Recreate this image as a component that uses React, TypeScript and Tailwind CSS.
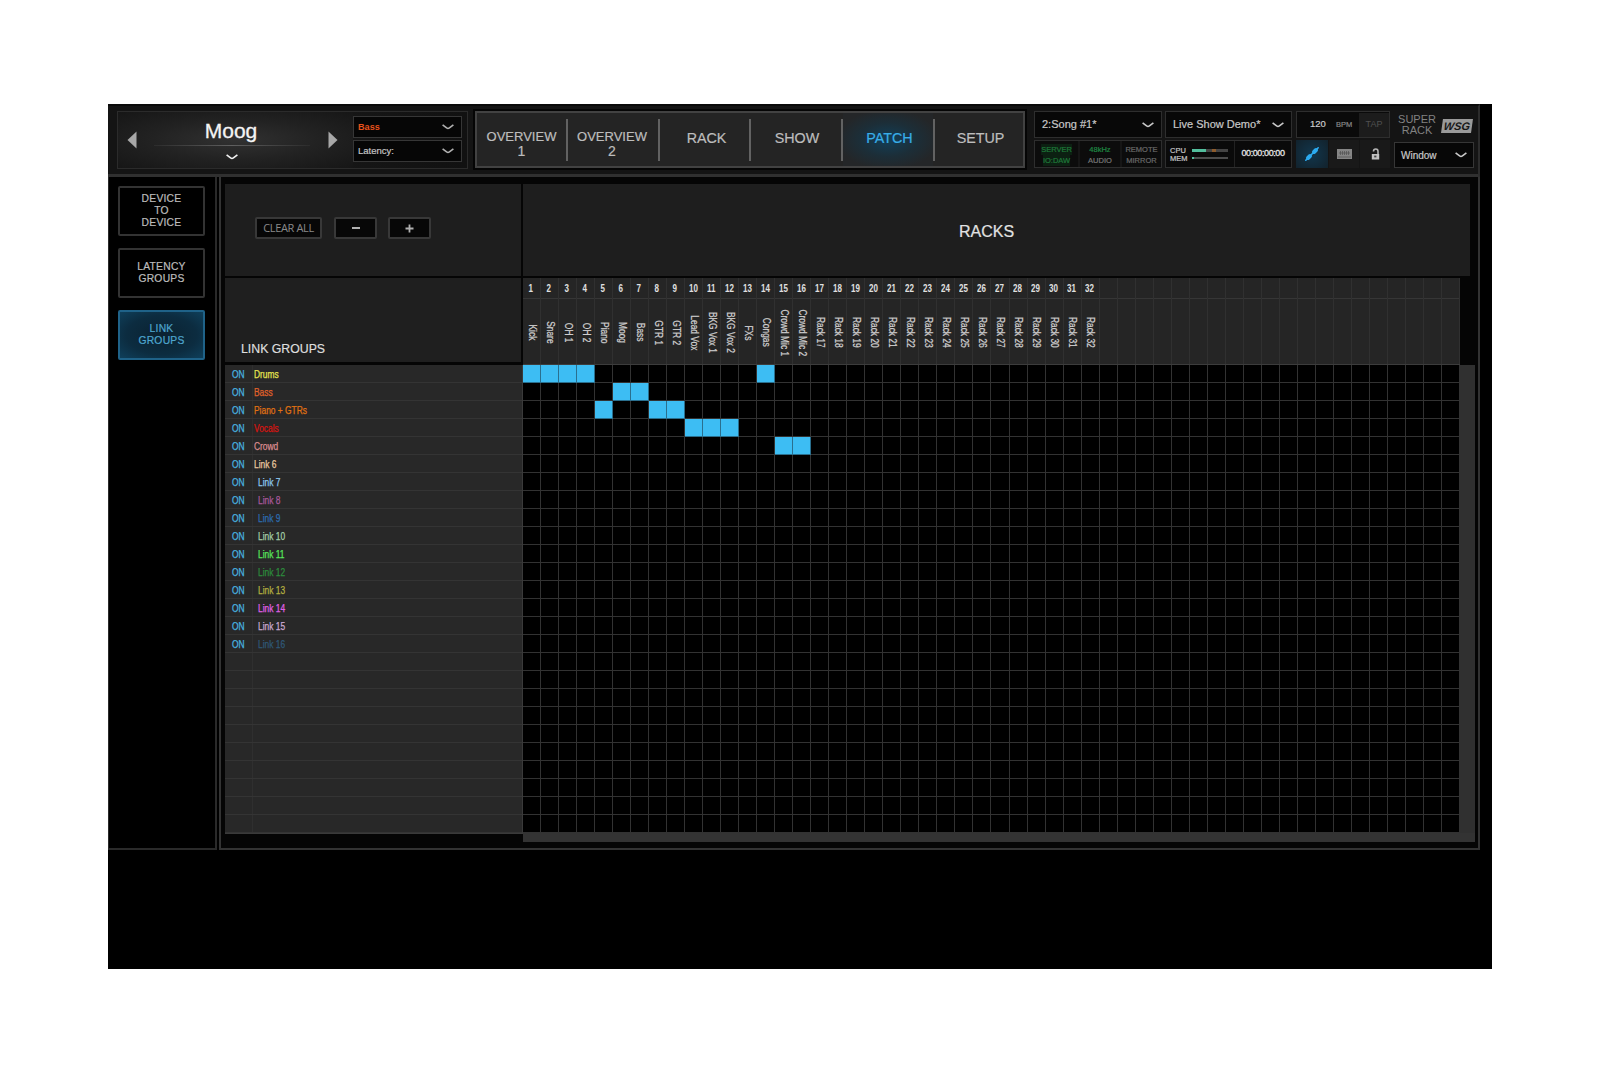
import React from "react";

const SANS = "font-['Liberation_Sans',Arial,sans-serif]";

const COLUMN_NAMES = [
  "Kick", "Snare", "OH 1", "OH 2", "Piano", "Moog", "Bass", "GTR 1", "GTR 2", "Lead Vox",
  "BKG Vox 1", "BKG Vox 2", "FXs", "Congas", "Crowd Mic 1", "Crowd Mic 2",
  ...Array.from({ length: 16 }, (_, i) => `Rack ${i + 17}`),
];
const COLS = 52;
const ROWS = 26;

const ACTIVE: number[][] = [[1, 2, 3, 4, 14], [6, 7], [5, 8, 9], [10, 11, 12], [15, 16]];

const GROUPS = [
  { name: "Drums", color: "text-[#e6e650]" },
  { name: "Bass", color: "text-[#e0622a]" },
  { name: "Piano + GTRs", color: "text-[#e07212]" },
  { name: "Vocals", color: "text-[#d81410]" },
  { name: "Crowd", color: "text-[#dc8c90]" },
  { name: "Link 6", color: "text-[#ecc9a0]" },
  { name: "Link 7", color: "text-[#8cc8f0]" },
  { name: "Link 8", color: "text-[#a8589c]" },
  { name: "Link 9", color: "text-[#2c6cb0]" },
  { name: "Link 10", color: "text-[#a4cfa8]" },
  { name: "Link 11", color: "text-[#58e85c]" },
  { name: "Link 12", color: "text-[#2c8c3c]" },
  { name: "Link 13", color: "text-[#b4b040]" },
  { name: "Link 14", color: "text-[#e060e8]" },
  { name: "Link 15", color: "text-[#ccaad4]" },
  { name: "Link 16", color: "text-[#2f5878]" },
];

function Chevron({ className = "" }: { className?: string }) {
  return (
    <svg className={`h-[6px] w-[12px] shrink-0 ${className}`} viewBox="0 0 12 6" fill="none" stroke="currentColor" strokeWidth="1.6">
      <path d="M0.6 0.8L4.6 3.9Q6 4.9 7.4 3.9L11.4 0.8" />
    </svg>
  );
}

function RackSelector() {
  return (
    <div className="flex h-[58px] w-[351px] border border-[#2b2b2b] bg-gradient-to-r from-[#1e1e1e] via-[#181818] to-[#111111]">
      <div className="flex w-[235px] items-center bg-[radial-gradient(ellipse_at_center,#313131_0%,#222222_50%,#161616_100%)] pl-[9px]">
        <svg className="h-[18px] w-[10px]" viewBox="0 0 10 18"><path d="M9.5 0.5V17.5L0.5 9z" fill="#a8a8a8" /></svg>
        <div className="ml-[17px] flex h-full w-[156px] flex-col items-center">
          <div className="flex h-[33px] items-end pr-[2px] text-[21px] leading-[29px] text-[#f4f4f4] [-webkit-text-stroke:0.3px]">Moog</div>
          <div className="h-px w-full bg-gradient-to-r from-[#2c2c2c] via-[#606060] to-[#2c2c2c]" />
          <Chevron className="mt-[8px] text-[#f2f2f2]" />
        </div>
        <svg className="ml-[18px] h-[18px] w-[10px]" viewBox="0 0 10 18"><path d="M0.5 0.5V17.5L9.5 9z" fill="#a8a8a8" /></svg>
      </div>
      <div className="flex w-[109px] flex-col gap-[2px] pt-[4px]">
        <div className="flex h-[22px] items-center justify-between border border-[#363636] bg-[#060606] pl-[4px] pr-[7px] text-[9.5px] font-bold text-[#e8531c]">
          <span className="inline-block origin-left scale-x-[0.96]">Bass</span>
          <Chevron className="text-[#b0b0b0]" />
        </div>
        <div className="flex h-[22px] items-center justify-between border border-[#363636] bg-[#060606] pl-[4px] pr-[7px] text-[9.5px] text-[#c4c4c4] [-webkit-text-stroke:0.2px]">
          <span>Latency:</span>
          <Chevron className="text-[#b0b0b0]" />
        </div>
      </div>
    </div>
  );
}

function NavItem({ children, active, last, layout }: { children: React.ReactNode; active?: boolean; last?: boolean; layout: string }) {
  return (
    <>
      <div
        className={`flex h-full shrink-0 flex-col items-center justify-center text-center ${
          active
            ? "bg-[radial-gradient(ellipse_at_center,#123f58_0%,#1c2e38_45%,#242628_80%)] text-[#38aee8]"
            : "text-[#bdbdbd]"
        } ${layout}`}
      >
        {children}
      </div>
      {!last && <div className="h-[42px] w-[2px] shrink-0 bg-[#626262]" />}
    </>
  );
}

function Nav() {
  return (
    <nav className="ml-[7px] flex h-[57px] w-[550px] items-center border-2 border-[#424242] bg-[#242424] text-[14.3px] shadow-[0_0_0_2px_#050505] [-webkit-text-stroke:0.2px]">
      <NavItem layout="w-[89px] pt-[10px]">
        <span className="text-[13px] leading-[14px]">OVERVIEW</span>
        <span className="text-[14px] leading-[15px]">1</span>
      </NavItem>
      <NavItem layout="w-[90px] pt-[10px] pr-[2px]">
        <span className="text-[13px] leading-[14px]">OVERVIEW</span>
        <span className="text-[14px] leading-[15px]">2</span>
      </NavItem>
      <NavItem layout="w-[89px] pl-[4px] pb-px">RACK</NavItem>
      <NavItem layout="w-[90px] pl-[2px] pb-px">SHOW</NavItem>
      <NavItem active layout="w-[90px] pl-[3px] pb-px">PATCH</NavItem>
      <NavItem last layout="w-[88px] pl-[3px] pb-px">SETUP</NavItem>
    </nav>
  );
}

function StatusCell({ top, bottom, topColor, bottomColor, width }: { top: string; bottom: string; topColor: string; bottomColor: string; width: string }) {
  return (
    <div className={`flex flex-col items-center justify-center bg-[#0c0c0c] pt-px text-[7.5px] leading-[11px] [-webkit-text-stroke:0.2px] ${width}`}>
      <span className={topColor}>{top}</span>
      <span className={bottomColor}>{bottom}</span>
    </div>
  );
}

function StatusPanel() {
  return (
    <div className="ml-[9px] flex gap-[4px]">
      <div className="flex w-[258px] flex-col gap-[2px]">
        <div className="flex h-[27px] gap-[3px]">
          <div className="flex w-[128px] items-center justify-between border border-[#2e2e2e] bg-[#080808] pl-[7px] pr-[7px] text-[11px] text-[#c8c8c8] [-webkit-text-stroke:0.2px]">
            <span>2:Song #1*</span>
            <Chevron />
          </div>
          <div className="flex w-[127px] items-center justify-between border border-[#2e2e2e] bg-[#080808] pl-[7px] pr-[7px] text-[11px] text-[#c8c8c8] [-webkit-text-stroke:0.2px]">
            <span className="whitespace-nowrap">Live Show Demo*</span>
            <Chevron />
          </div>
        </div>
        <div className="flex h-[28px] gap-[3px]">
          <div className="flex w-[128px] gap-[2px] border border-[#2e2e2e] bg-[#161616]">
            <StatusCell top="SERVER" bottom="IO:DAW" topColor="bg-[#0c2012] text-[#1f7a3a]" bottomColor="bg-[#0c2012] text-[#1f7a3a]" width="w-[43px]" />
            <StatusCell top="48kHz" bottom="AUDIO" topColor="text-[#1f8a44]" bottomColor="text-[#777777]" width="w-[40px]" />
            <StatusCell top="REMOTE" bottom="MIRROR" topColor="text-[#6a6a6a]" bottomColor="text-[#6a6a6a]" width="w-[39px]" />
          </div>
          <div className="flex w-[127px] border border-[#2e2e2e] bg-[#0a0a0a]">
            <div className="flex w-[69px] flex-col justify-center gap-px border-r border-[#222] pl-[4px] text-[7.5px] leading-[7px] text-[#c8c8c8] [-webkit-text-stroke:0.2px]">
              <div className="flex items-center gap-[3px]">
                <span className="w-[19px]">CPU</span>
                <span className="flex h-[3px] w-[36px] bg-[#444]">
                  <span className="w-[14px] bg-[#52bd9c]" />
                  <span className="ml-[6px] w-[4px] bg-[#8d5b2c]" />
                </span>
              </div>
              <div className="flex items-center gap-[3px]">
                <span className="w-[19px]">MEM</span>
                <span className="flex h-[2px] w-[36px] bg-[#4c4c4c]">
                  <span className="w-[2px] bg-[#52bd9c]" />
                </span>
              </div>
            </div>
            <div className="flex flex-1 items-center justify-center text-[9px] text-[#e4e4e4] [-webkit-text-stroke:0.3px]">
              <span className="whitespace-nowrap tracking-[-0.4px]">00:00:00:00</span>
            </div>
          </div>
        </div>
      </div>
      <div className="flex w-[94px] flex-col gap-[2px]">
        <div className="flex h-[27px] items-center border border-[#2e2e2e] bg-[#0a0a0a] text-[#cccccc]">
          <span className="w-[39px] pl-[13px] text-[9.5px] [-webkit-text-stroke:0.2px]">120</span>
          <span className="w-[23px] text-[7.5px] text-[#888888] [-webkit-text-stroke:0.2px]">BPM</span>
          <span className="flex h-[24px] flex-1 items-center justify-center bg-[#1c1c1c] text-[9px] text-[#505050]">TAP</span>
        </div>
        <div className="flex h-[28px] gap-px">
          <div className="flex w-[32px] items-center justify-center bg-[radial-gradient(circle_at_center,#12364c_0%,#12222c_100%)]">
            <svg className="h-[16px] w-[16px]" viewBox="0 0 16 16" stroke="#2cabf0" strokeLinecap="round">
              <path d="M4 12L6 10M10 6L12 4" strokeWidth="4" />
              <path d="M1.8 14.2L14.2 1.8" strokeWidth="1.6" />
            </svg>
          </div>
          <div className="flex w-[30px] items-center justify-center bg-[#191919]">
            <svg className="h-[10px] w-[15px]" viewBox="0 0 15 10">
              <rect width="15" height="10" fill="#858585" />
              <path d="M3.5 2V6M5.5 2V6M7.5 2V6M9.5 2V6M11.5 2V6M1 8H14M2 4H13" stroke="#505050" strokeWidth="0.7" />
            </svg>
          </div>
          <div className="flex w-[30px] items-center justify-center bg-[#191919]">
            <svg className="h-[12px] w-[9px]" viewBox="0 0 9 12">
              <path d="M2.5 3.5C2.5 0.2 7 0.2 7 3.5V6.5" fill="none" stroke="#b4b4b4" strokeWidth="1.6" />
              <rect x="0.8" y="6" width="7.4" height="5.5" fill="#c2c2c2" />
              <rect x="3.2" y="7.6" width="2.2" height="1.8" fill="#444" />
            </svg>
          </div>
        </div>
      </div>
      <div className="flex w-[80px] flex-col">
        <div className="flex h-[31px] items-start justify-between pr-[2px] pt-[3px]">
          <div className="flex w-[42px] flex-col items-center pl-[4px] text-[11px] leading-[11px] text-[#828282]">
            <span>SUPER</span>
            <span>RACK</span>
          </div>
          <div className="mt-[5px] flex h-[14px] w-[30px] -skew-x-[8deg] items-center justify-center bg-[#9a9a9a] text-[11px] font-bold italic text-[#171717]">WSG</div>
        </div>
        <div className="flex h-[26px] items-center justify-between border border-[#363636] bg-[#070707] pl-[6px] pr-[6px] text-[10px] text-[#c8c8c8] [-webkit-text-stroke:0.2px]">
          <span>Window</span>
          <Chevron />
        </div>
      </div>
    </div>
  );
}

function SideButton({ lines, active }: { lines: string[]; active?: boolean }) {
  return (
    <button
      className={`flex h-[50px] w-[87px] flex-col items-center justify-center rounded-[2px] border-2 text-[10.3px] leading-[12.3px] tracking-[0.25px] [-webkit-text-stroke:0.2px] ${
        active
          ? "border-[#1f6288] bg-[radial-gradient(ellipse_at_center,#0b2230_0%,#0c2c40_60%,#0f3f5a_100%)] text-[#4ea6cf]"
          : "border-[#333333] bg-black text-[#bcbcbc]"
      }`}
    >
      {lines.map((l, i) => (
        <span key={i}>{l}</span>
      ))}
    </button>
  );
}

function ToolButton({ children, width }: { children: React.ReactNode; width: string }) {
  return (
    <button className={`flex h-[22px] items-center justify-center rounded-[2px] border-2 border-[#383838] bg-[#070707] text-[#a6a6a6] ${width}`}>
      {children}
    </button>
  );
}

function GroupList() {
  return (
    <div className="h-[469px] w-[298px] border-b border-r border-[#3a3a3a] bg-[#282828]">
      {Array.from({ length: ROWS }, (_, r) => {
        const g = GROUPS[r];
        return (
          <div key={r} className="flex h-[18px] border-b border-[#343434] text-[10px] leading-[19px] [-webkit-text-stroke:0.25px]">
            <div className="w-[28px] border-r border-[#2f2f2f] pl-[7px] text-[#48b4e0]">
              {g && <span className="inline-block origin-left scale-x-[0.84]">ON</span>}
            </div>
            {g && (
              <div className={`${r > 5 ? "pl-[5px]" : "pl-px"} ${g.color}`}>
                <span className="inline-block origin-left scale-x-[0.84] whitespace-nowrap">{g.name}</span>
              </div>
            )}
          </div>
        );
      })}
    </div>
  );
}

function ColumnHeaders() {
  return (
    <div className="grid h-[87px] w-[937px] grid-cols-[repeat(52,minmax(0,1fr))] border-b border-[#3c3c3c] bg-[#252525]">
      {Array.from({ length: COLS }, (_, c) => (
        <div key={c} className="flex flex-col items-center border-r border-[#303030]">
          <div className="flex h-[21px] w-full items-center justify-center border-b border-[#363636] pr-px pt-px text-[10px] font-bold text-[#e0e0e0]">
            <span className="inline-block scale-x-[0.8]">{c < 32 ? c + 1 : ""}</span>
          </div>
          <div className="flex h-[65px] items-center justify-center pt-[2px] text-[10px] leading-[12px] text-[#cfcfcf] [-webkit-text-stroke:0.25px]">
            <span className="inline-block scale-y-[0.84] whitespace-nowrap [writing-mode:vertical-rl]">{COLUMN_NAMES[c] ?? ""}</span>
          </div>
        </div>
      ))}
    </div>
  );
}

function Matrix() {
  return (
    <div className="grid h-[468px] w-[937px] grid-cols-[repeat(52,minmax(0,1fr))] grid-rows-[repeat(26,18px)] bg-black">
      {Array.from({ length: ROWS * COLS }, (_, i) => {
        const r = Math.floor(i / COLS);
        const c = (i % COLS) + 1;
        const on = ACTIVE[r]?.includes(c);
        return <div key={i} className={`border-b border-r ${on ? "border-[#2a6f8e] bg-[#3dbdf3]" : "border-[#323232]"}`} />;
      })}
    </div>
  );
}

export default function App() {
  return (
    <div className={`h-[1074px] w-[1600px] overflow-hidden bg-white pl-[108px] pt-[104px] ${SANS}`}>
      <div className="h-[865px] w-[1384px] bg-black">
        <header className="flex h-[73px] w-[1372px] items-start border-b-[3px] border-r-2 border-t-2 border-b-[#303030] border-r-[#2c2c2c] border-t-[#0a0a0a] bg-[#141414] pl-[9px] pt-[5px]">
          <RackSelector />
          <Nav />
          <StatusPanel />
        </header>

        <div className="flex h-[673px] w-[1372px]">
          <aside className="flex w-[109px] flex-col gap-[12px] border-b-2 border-l border-r-2 border-[#2a2a2a] pl-[9px] pt-[9px]">
            <SideButton lines={["DEVICE", "TO", "DEVICE"]} />
            <SideButton lines={["LATENCY", "GROUPS"]} />
            <SideButton lines={["LINK", "GROUPS"]} active />
          </aside>

          <main className="ml-[2px] flex w-[1261px] flex-col border-b-2 border-l-2 border-r-2 border-[#333333] bg-[#050505] pl-[4px] pt-[7px]">
            <div className="flex gap-[2px]">
              <div className="flex h-[92px] w-[296px] bg-[#1e1e1e] pl-[30px] pt-[33px]">
                <ToolButton width="w-[67px]">
                  <span className="whitespace-nowrap font-['Open_Sans',sans-serif] text-[11px] tracking-[-0.35px] text-[#8a8a8a]">CLEAR ALL</span>
                </ToolButton>
                <div className="ml-[12px]">
                  <ToolButton width="w-[43px]"><span className="h-[2px] w-[8px] bg-[#b0b0b0]" /></ToolButton>
                </div>
                <div className="ml-[11px]">
                  <ToolButton width="w-[43px]">
                    <svg className="h-[9px] w-[9px]" viewBox="0 0 9 9"><path d="M4.5 0.5V8.5M0.5 4.5H8.5" stroke="#b0b0b0" strokeWidth="1.8" /></svg>
                  </ToolButton>
                </div>
              </div>
              <div className="flex h-[92px] w-[947px] items-center justify-center bg-[#1e1e1e] pr-[20px] pt-[4px] text-[16px] text-[#e2e2e2] [-webkit-text-stroke:0.2px]">RACKS</div>
            </div>

            <div className="mt-[2px] flex">
              <div className="flex h-[84px] w-[296px] items-end bg-[#1f1f1f] pb-[4px] pl-[16px] text-[12.3px] text-[#dedede] [-webkit-text-stroke:0.2px]">LINK GROUPS</div>
              <div className="ml-[2px]"><ColumnHeaders /></div>
            </div>

            <div className="flex">
              <GroupList />
              <div className="flex flex-col">
                <div className="flex w-[952px]">
                  <Matrix />
                  <div className="flex-1 bg-[#303030]" />
                </div>
                <div className="h-[9px] w-[952px] bg-[#333333]" />
              </div>
            </div>
          </main>
        </div>
      </div>
    </div>
  );
}
